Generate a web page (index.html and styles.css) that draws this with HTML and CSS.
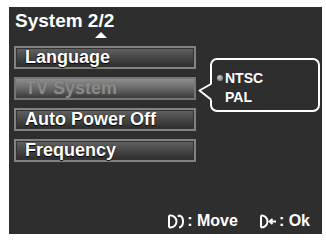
FILE: index.html
```html
<!DOCTYPE html>
<html>
<head>
<meta charset="utf-8">
<link rel="stylesheet" href="styles.css">
</head>
<body>
<div class="screen">
  <div class="title">System 2/2</div>
  <div class="up"></div>
  <div class="menu">
    <div class="item"><span>Language</span></div>
    <div class="item sel"><span>TV System</span></div>
    <div class="item"><span>Auto Power Off</span></div>
    <div class="item"><span>Frequency</span></div>
  </div>
  <div class="popup">
    <svg class="pointer" width="14" height="18" viewBox="0 0 14 18"><polygon points="14,1 2,8 14,17" fill="#2e2e2e"/><polyline points="13,1 1.5,7.5 13,16.5" fill="none" stroke="#fff" stroke-width="2" stroke-linejoin="round"/></svg>
    <div class="opt"><span class="dot"></span>NTSC</div>
    <div class="opt">PAL</div>
  </div>
  <div class="hints">
    <svg class="ico" width="18" height="15" viewBox="0 0 18 15"><path d="M2 1.5 V13.5 M2 1.5 H3.5 A6 6 0 0 1 3.5 13.5 H2" fill="none" stroke="#fff" stroke-width="2"/><path d="M12 1.5 Q16 2 16 7.5 Q16 13 12 13.5" fill="none" stroke="#fff" stroke-width="2"/><path d="M11.5 0.8 V3" stroke="#fff" stroke-width="1.6"/></svg>
    <span class="txt">: Move</span>
    <svg class="ico ok" width="18" height="15" viewBox="0 0 18 15"><path d="M2 1.5 V13.5 M2 1.5 H2.5 A6 6 0 0 1 2.5 13.5 H2" fill="none" stroke="#fff" stroke-width="2"/><path d="M17 7.5 H11 M13.5 5 L10.5 7.5 L13.5 10" fill="none" stroke="#fff" stroke-width="1.8"/></svg>
    <span class="txt">: Ok</span>
  </div>
</div>
</body>
</html>
```
FILE: styles.css
```css
html, body { margin: 0; padding: 0; background: #fff; }
.screen {
  position: relative;
  margin: 7px 0 0 9px;
  width: 313px;
  height: 227px;
  background: #2e2e2e;
  box-sizing: border-box;
  padding: 4px 0 0 5px;
  display: flex;
  flex-direction: column;
  font-family: "Liberation Sans", Arial, sans-serif;
  font-weight: bold;
  color: #fff;
}
.title {
  font-size: 19px;
  line-height: 19px;
  padding-left: 1px;
}
.up {
  width: 0; height: 0;
  margin: 2px 0 0 81px;
  border-left: 6px solid transparent;
  border-right: 6px solid transparent;
  border-bottom: 6px solid #fff;
}
.menu {
  margin-top: 8px;
  display: flex;
  flex-direction: column;
  gap: 8px;
}
.item {
  width: 182px;
  height: 23px;
  box-sizing: border-box;
  border: 2px solid #828282;
  box-shadow: inset 0 0 0 1px #333;
  background: linear-gradient(#626262, #444 55%, #2c2c2c);
  display: flex;
  align-items: center;
  padding-left: 9px;
  font-size: 18px;
  line-height: 19px;
  text-shadow: 0 0 1px #111, 0 1px 1px #000;
}
.item.sel {
  border-color: #767676;
  box-shadow: none;
  background: linear-gradient(#8e8e8e, #6c6c6c 45%, #3a3a3a);
  color: #8a8a8a;
  text-shadow: 0 0 1px #555;
}
.popup {
  position: absolute;
  left: 201px;
  top: 51px;
  width: 110px;
  height: 54px;
  box-sizing: border-box;
  border: 2px solid #fff;
  border-radius: 7px;
  padding: 9px 0 0 13px;
  font-size: 14px;
  line-height: 19px;
}
.pointer {
  position: absolute;
  left: -14px;
  top: 23px;
}
.opt { position: relative; }
.dot {
  position: absolute;
  left: -8px;
  top: 6px;
  width: 6px;
  height: 6px;
  border-radius: 50%;
  background: radial-gradient(circle at 35% 35%, #c8c8c8, #6e6e6e);
}
.hints {
  margin-top: auto;
  display: flex;
  align-items: center;
  justify-content: flex-end;
  padding: 0 12px 5px 0;
  font-size: 16px;
  line-height: 16px;
}
.ico { display: block; margin-right: 2px; }
.ico.ok { margin-left: 21px; }
.txt { white-space: pre; }
```
